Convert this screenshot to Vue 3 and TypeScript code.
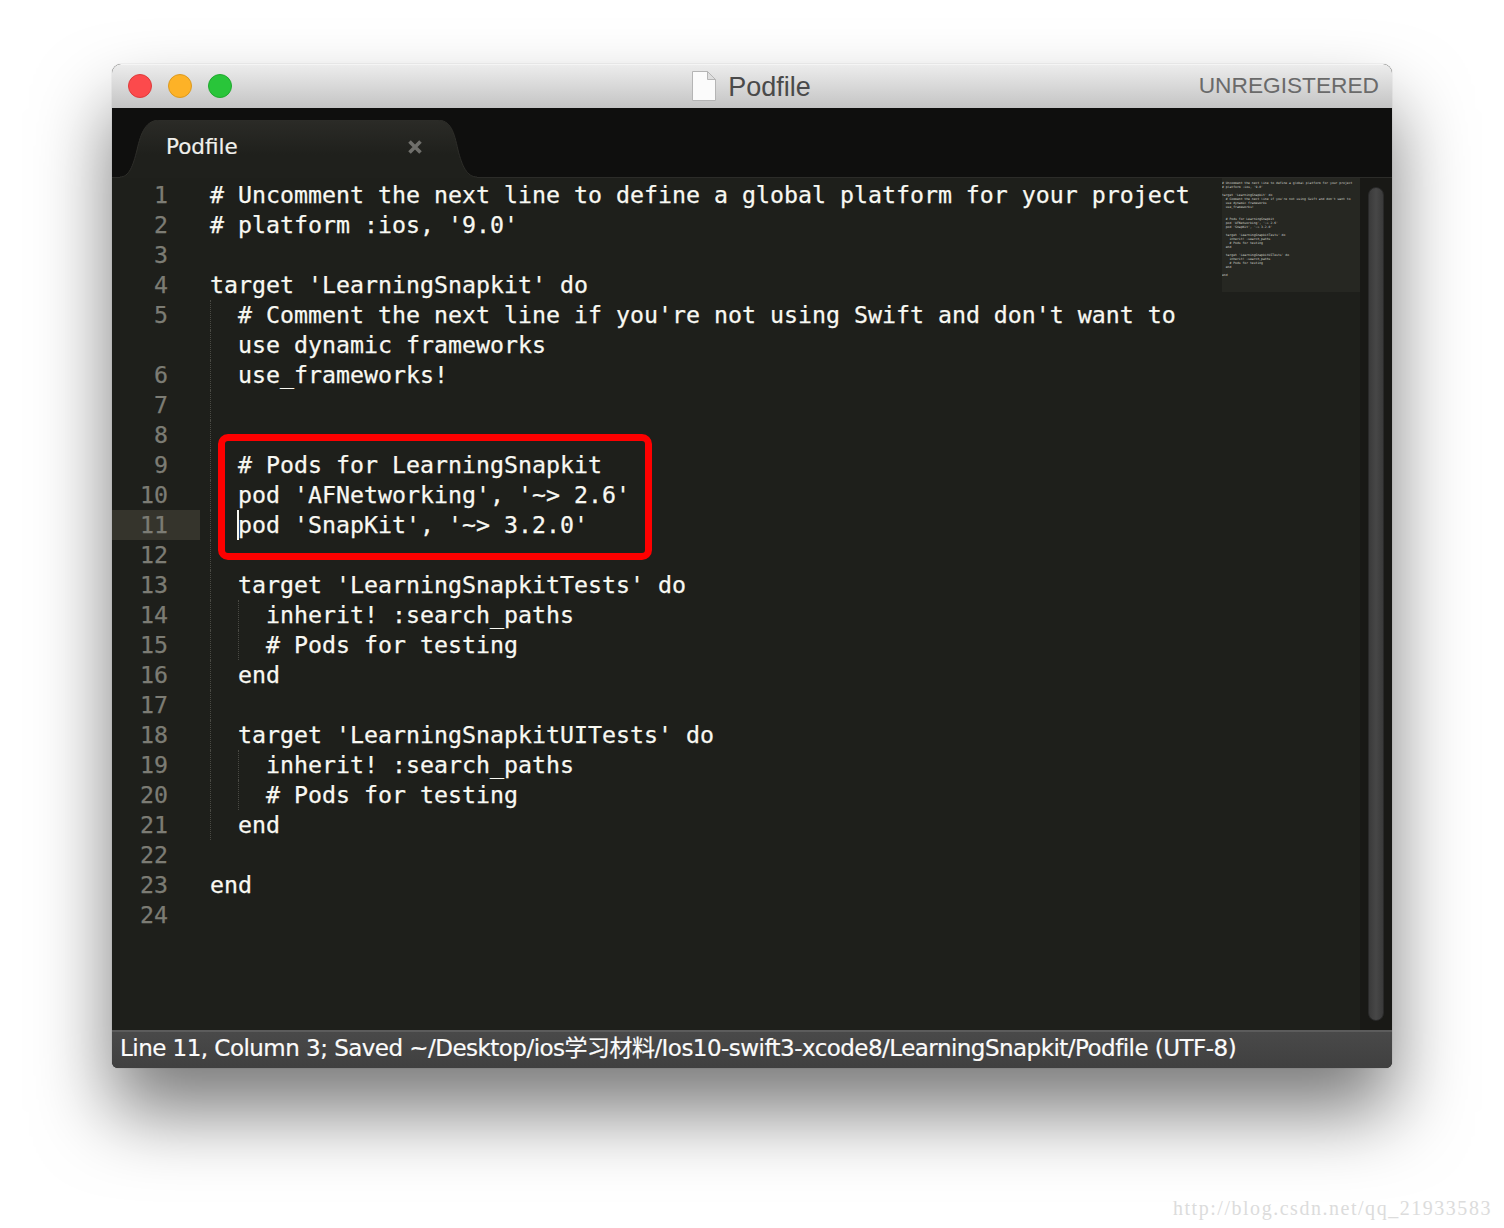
<script setup lang="ts">
interface Row { num: string; indent: number; text: string; current?: boolean }
const source: Array<[string, number, string]> = [
  ['1', 0, "# Uncomment the next line to define a global platform for your project"],
  ['2', 0, "# platform :ios, '9.0'"],
  ['3', 0, ''],
  ['4', 0, "target 'LearningSnapkit' do"],
  ['5', 1, "# Comment the next line if you're not using Swift and don't want to"],
  ['', 1, 'use dynamic frameworks'],
  ['6', 1, 'use_frameworks!'],
  ['7', 1, ''],
  ['8', 1, ''],
  ['9', 1, '# Pods for LearningSnapkit'],
  ['10', 1, "pod 'AFNetworking', '~> 2.6'"],
  ['11', 1, "pod 'SnapKit', '~> 3.2.0'"],
  ['12', 1, ''],
  ['13', 1, "target 'LearningSnapkitTests' do"],
  ['14', 2, 'inherit! :search_paths'],
  ['15', 2, '# Pods for testing'],
  ['16', 1, 'end'],
  ['17', 1, ''],
  ['18', 1, "target 'LearningSnapkitUITests' do"],
  ['19', 2, 'inherit! :search_paths'],
  ['20', 2, '# Pods for testing'],
  ['21', 1, 'end'],
  ['22', 0, ''],
  ['23', 0, 'end'],
  ['24', 0, ''],
]
const rows: Row[] = source.map(([num, indent, text]) => ({ num, indent, text, current: num === '11' }))
const miniText = rows.map((r) => '  '.repeat(r.indent) + r.text).join('\n')
</script>

<template>
  <div class="page">
    <div class="window">
      <header class="titlebar">
        <div class="lights">
          <span class="light red"></span>
          <span class="light yellow"></span>
          <span class="light green"></span>
        </div>
        <div class="title">
          <svg class="doc" width="26" height="32" viewBox="0 0 26 32">
            <path d="M1.5 1.5H16.5L24.5 9.5V30.5H1.5Z" fill="#fbfbfb" stroke="#b5b5b5" />
            <path d="M16.5 1.5V9.5H24.5Z" fill="#dedede" stroke="#b5b5b5" />
          </svg>
          <span class="title-text">Podfile</span>
        </div>
        <div class="unregistered">UNREGISTERED</div>
      </header>

      <div class="tabbar">
        <div class="tab">
          <svg class="tab-shape" width="357" height="58" viewBox="0 0 357 58">
            <defs>
              <linearGradient id="tabFill" x1="0" y1="0" x2="0" y2="1">
                <stop offset="0" stop-color="#2b2b27" />
                <stop offset="0.6" stop-color="#1f201c" />
              </linearGradient>
            </defs>
            <path d="M0 57C9 57 13 46 17 30C21 12 26 0 40 0H317C331 0 334 12 338 30C342 46 347 57 357 57V58H0Z" fill="url(#tabFill)" />
            <path d="M0 57C9 57 13 46 17 30C21 12 26 0 40 0H317C331 0 334 12 338 30C342 46 347 57 357 57" fill="none" stroke="#2e2e2a" />
          </svg>
          <span class="tab-label">Podfile</span>
          <svg class="tab-close" width="14" height="14" viewBox="0 0 14 14">
            <path d="M1.5 1.5L12.5 12.5M12.5 1.5L1.5 12.5" stroke="#6f6f6b" stroke-width="3.6" />
          </svg>
        </div>
      </div>

      <main class="editor">
        <div class="code">
          <div v-for="(row, i) in rows" :key="i" class="row">
            <div class="gutter" :class="{ current: row.current }">{{ row.num }}</div>
            <div class="line">
              <span v-for="g in row.indent" :key="g" class="guide"></span>
              <span v-if="row.current" class="caret"></span>
              <span class="text">{{ row.text }}</span>
            </div>
          </div>
        </div>
        <div class="minimap-col">
          <pre class="minimap">{{ miniText }}</pre>
        </div>
        <div class="scrollbar">
          <div class="thumb"></div>
        </div>
        <div class="highlight-box"></div>
      </main>

      <footer class="status">Line 11, Column 3; Saved ~/Desktop/ios学习材料/Ios10-swift3-xcode8/LearningSnapkit/Podfile (UTF-8)</footer>
    </div>
    <div class="watermark">http://blog.csdn.net/qq_21933583</div>
  </div>
</template>

<style>
html, body { background: #ffffff; }
</style>

<style scoped>
.page {
  position: relative;
  box-sizing: border-box;
  width: 1504px;
  height: 1228px;
  padding: 64px 112px 0;
  overflow: hidden;
  background: #fff;
}
.window {
  display: flex;
  flex-direction: column;
  width: 1280px;
  height: 1004px;
  border-radius: 9px 9px 6px 6px;
  overflow: hidden;
  background: #1e1f1b;
  box-shadow: 0 44px 76px rgba(0, 0, 0, 0.52), 0 0 1px rgba(0, 0, 0, 0.4);
}
.titlebar {
  box-sizing: border-box;
  flex: none;
  height: 44px;
  padding-bottom: 2px;
  display: grid;
  grid-template-columns: 1fr auto 1fr;
  align-items: center;
  background: linear-gradient(#ececec, #c4c4c4);
  border-top: 1px solid #f5f5f5;
}
.lights { display: flex; gap: 16px; padding-left: 16px; }
.light { box-sizing: border-box; width: 24px; height: 24px; border-radius: 50%; border: 1px solid; }
.red { background: #fc4a4c; border-color: #de3b3b; }
.yellow { background: #fdb227; border-color: #dc9a1f; }
.green { background: #29c53a; border-color: #20a92f; }
.title {
  display: flex;
  align-items: center;
  gap: 11px;
  padding-right: 2px;
  font: 27px "Liberation Sans", sans-serif;
  color: #4a4a4a;
}
.title-text { padding-top: 3px; }
.unregistered {
  justify-self: end;
  padding-right: 13px;
  font: 22.7px "Liberation Sans", sans-serif;
  color: #6a6a6a;
}
.tabbar {
  box-sizing: border-box;
  flex: none;
  height: 70px;
  padding: 12px 0 0 8px;
  background: #0f0f0e;
  border-bottom: 1px solid #2c2c29;
}
.tab {
  position: relative;
  display: flex;
  align-items: center;
  width: 357px;
  height: 58px;
  padding: 0 0 6px 46px;
  box-sizing: border-box;
}
.tab-shape { position: absolute; left: 0; top: 0; }
.tab-label {
  position: relative;
  width: 242px;
  font: 21.5px "DejaVu Sans", sans-serif;
  color: #f0f0ec;
  -webkit-text-stroke: 0.2px #f0f0ec;
}
.tab-close { position: relative; margin-top: 2px; }
.editor {
  position: relative;
  flex: 1;
  display: flex;
  min-height: 0;
  background: #1e1f1b;
}
.code {
  flex: none;
  width: 1110px;
  padding-top: 2px;
  font: 23.25px/30px "DejaVu Sans Mono", monospace;
  color: #f8f8f2;
}
.row { display: flex; height: 30px; }
.gutter {
  box-sizing: border-box;
  flex: none;
  width: 88px;
  padding-right: 32px;
  text-align: right;
  color: #7c7c74;
  -webkit-text-stroke: 0.25px #7c7c74;
}
.gutter.current { background: #35342c; }
.line { position: relative; display: flex; padding-left: 10px; white-space: pre; }
.text { -webkit-text-stroke: 0.25px #f8f8f2; }
.guide { flex: none; width: 28px; box-sizing: border-box; border-left: 1px dotted #4a4a44; }
.caret {
  position: absolute;
  left: 37px;
  top: 0;
  width: 1.5px;
  height: 30px;
  background: #f8f8f0;
}
.minimap-col { flex: none; width: 138px; }
.minimap {
  box-sizing: border-box;
  margin: 0;
  height: 114px;
  padding-top: 3px;
  background: #262722;
  font: 3.1px/4px "DejaVu Sans Mono", monospace;
  color: #d2d2ca;
  white-space: pre;
  overflow: hidden;
}
.scrollbar {
  flex: none;
  width: 32px;
  padding: 9px 8px;
  box-sizing: border-box;
  background: #191916;
}
.thumb {
  height: 100%;
  border-radius: 8px;
  background: linear-gradient(90deg, #3a3a3a, #474747 50%, #3a3a3a);
  border: 1px solid #2a2a2a;
  box-sizing: border-box;
}
.highlight-box {
  position: absolute;
  left: 106px;
  top: 256px;
  box-sizing: border-box;
  width: 434px;
  height: 126px;
  border: 7px solid #fe0000;
  border-radius: 10px;
}
.status {
  box-sizing: border-box;
  flex: none;
  height: 38px;
  padding-left: 8px;
  border-top: 2px solid #5c5c5c;
  background: linear-gradient(#494949, #404040);
  font: 23px/33px "DejaVu Sans", "Noto Sans CJK SC", sans-serif;
  letter-spacing: -0.53px;
  color: #fbfbfb;
  -webkit-text-stroke: 0.2px #fbfbfb;
  white-space: nowrap;
}
.watermark {
  position: absolute;
  left: 1173px;
  top: 1196px;
  font: 20px/24px "Liberation Serif", serif;
  letter-spacing: 1.53px;
  color: #dcdcdc;
  white-space: nowrap;
}
</style>
